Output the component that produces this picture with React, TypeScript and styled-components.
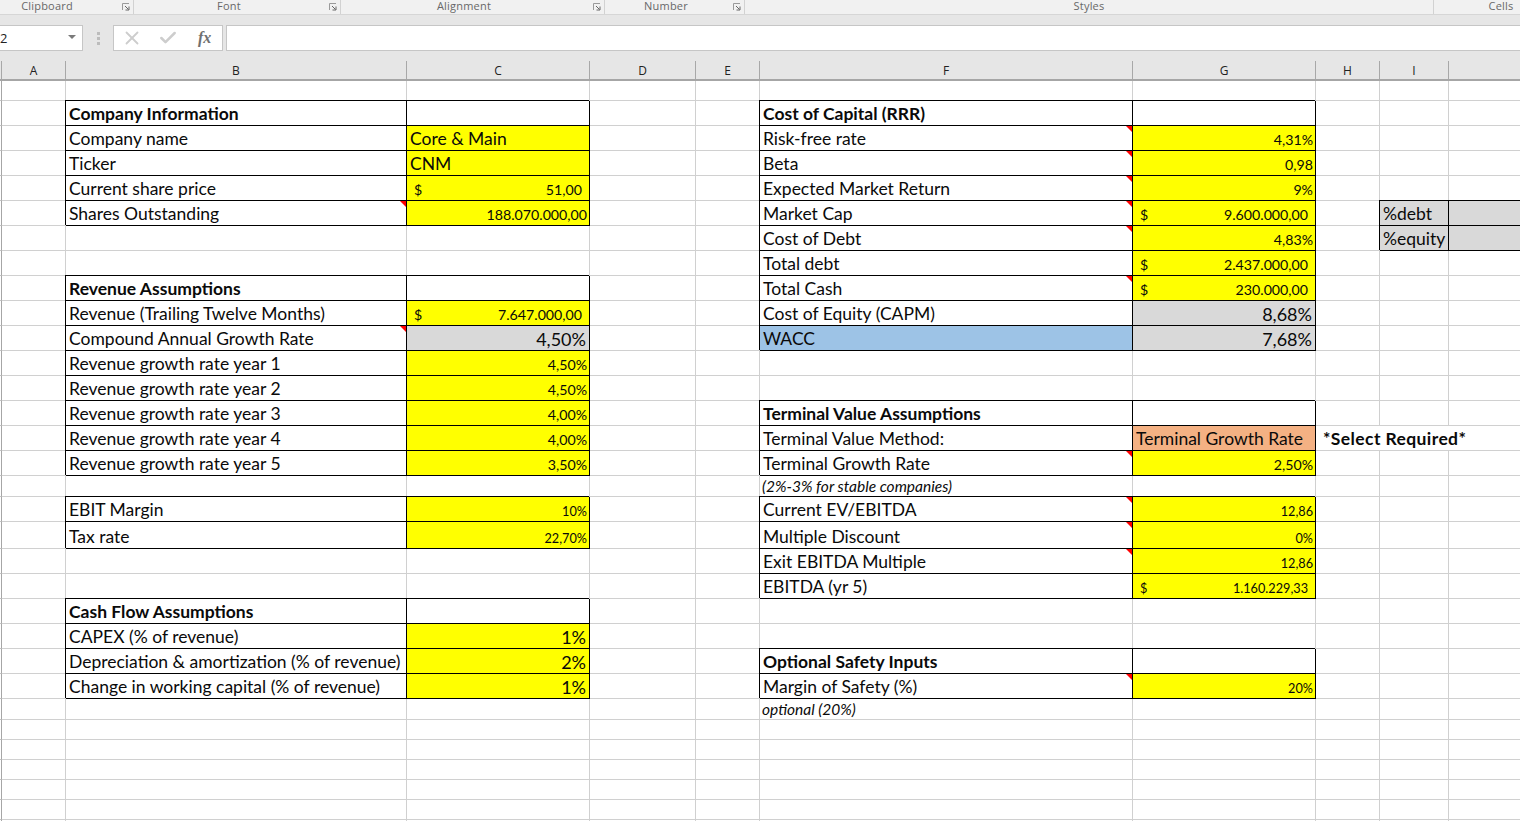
import React from 'react';
import styled, { createGlobalStyle } from 'styled-components';
import { Check, X } from 'lucide-react';

const GlobalStyle = createGlobalStyle`
  html, body {
    margin: 0;
    padding: 0;
    width: 1520px;
    height: 821px;
    overflow: hidden;
    background: #fff;
  }
  * {
    box-sizing: border-box;
  }
`;

const COLUMNS = '2px 64px 341px 183px 106px 64px 373px 183px 64px 69px 100px';
const ROW_HEIGHTS = [
  20, 25, 25, 25, 25, 25, 25, 25, 25, 25, 25, 25, 25, 25, 25, 25, 21, 25, 27, 25, 25, 25, 25, 25, 25, 21, 20, 20, 20, 20,
  20, 20,
];

const Page = styled.div`
  width: 1520px;
  height: 821px;
  overflow: hidden;
  background: #e6e6e6;
`;

const Ribbon = styled.div`
  display: flex;
  height: 15px;
  background: #f1f1f1;
  border-bottom: 1px solid #d6d6d6;
`;

const RibbonGroup = styled.div<{ $width: number; $line?: boolean }>`
  display: flex;
  width: ${p => p.$width}px;
  height: 14px;
  align-items: flex-start;
  border-right: ${p => (p.$line ? '1px solid #d2d2d2' : 'none')};
  padding-right: 3px;
`;

const GroupLabel = styled.div<{ $width: number }>`
  width: ${p => p.$width}px;
  flex: none;
  text-align: center;
  font: 11px/12px 'Open Sans', sans-serif;
  letter-spacing: 0.2px;
  color: #686868;
`;

const Launcher = styled.svg`
  width: 8px;
  height: 8px;
  margin-top: 3px;
  margin-left: auto;
`;

const FormulaBar = styled.div`
  display: flex;
  align-items: stretch;
  height: 26px;
  margin-top: 10px;
`;

const NameBox = styled.div`
  display: flex;
  align-items: center;
  justify-content: space-between;
  width: 83px;
  padding: 0 6px 0 0;
  background: #fff;
  border: 1px solid #c6c6c6;
  border-left: none;
  font: 13px 'Open Sans', sans-serif;
  color: #222;
`;

const DropArrow = styled.span`
  width: 0;
  height: 0;
  margin-top: -2px;
  border-left: 4px solid transparent;
  border-right: 4px solid transparent;
  border-top: 4px solid #7a7a7a;
`;

const Dots = styled.div`
  display: flex;
  flex-direction: column;
  justify-content: center;
  gap: 2px;
  width: 30px;
  padding-left: 14px;
`;

const Dot = styled.span`
  width: 3px;
  height: 3px;
  background: #bcbcbc;
`;

const FxBox = styled.div`
  display: flex;
  align-items: center;
  width: 110px;
  padding-left: 7px;
  padding-bottom: 1px;
  gap: 15px;
  background: #fff;
  border: 1px solid #c6c6c6;
  color: #cdcdcd;
`;

const FxLabel = styled.span`
  margin-left: 5px;
  font: italic bold 16px 'Liberation Serif', serif;
  color: #707070;
`;

const FormulaInput = styled.div`
  flex: 1;
  margin-left: 3px;
  background: #fff;
  border: 1px solid #c6c6c6;
  border-right: none;
`;

const HeadRow = styled.div`
  display: grid;
  grid-template-columns: ${COLUMNS};
  height: 30px;
  padding-top: 10px;
  background: #e6e6e6;
  border-bottom: 2px solid #a6a6a6;
`;

const HeadCell = styled.div`
  display: flex;
  align-items: center;
  justify-content: center;
  border-right: 1px solid #a8a8a8;
  font: 12px 'Open Sans', sans-serif;
  color: #222;
`;

const Sheet = styled.div`
  display: grid;
  grid-template-columns: ${COLUMNS};
  grid-template-rows: ${ROW_HEIGHTS.map(h => `${h}px`).join(' ')};
  background: #fff;
`;

const Gutter = styled.div`
  border-right: 1px solid #a6a6a6;
  border-bottom: 1px solid #c4c4c4;
`;

type Size = 'label' | 'big' | 'value' | 'tiny' | 'note';

const SIZES: Record<Size, { font: number; line: number; right: number }> = {
  label: { font: 17.5, line: 22, right: 2 },
  big: { font: 18, line: 22, right: 3 },
  value: { font: 14.2, line: 20, right: 2 },
  tiny: { font: 12.7, line: 20, right: 2 },
  note: { font: 15.5, line: 20, right: 2 },
};

const Cell = styled.div<{
  $fill?: string;
  $box?: boolean;
  $bold?: boolean;
  $italic?: boolean;
  $size: Size;
  $right?: boolean;
  $money?: boolean;
  $span?: number;
  $indent?: number;
  $loose?: boolean;
}>`
  position: relative;
  display: flex;
  align-items: flex-end;
  min-width: 0;
  grid-column: ${p => (p.$span ? `span ${p.$span}` : 'auto')};
  justify-content: ${p => (p.$money ? 'space-between' : p.$right ? 'flex-end' : 'flex-start')};
  padding-right: ${p => (p.$money ? 7 : SIZES[p.$size].right)}px;
  padding-left: ${p => p.$indent ?? (p.$money ? 7 : p.$italic ? 2 : 3)}px;
  background: ${p => p.$fill ?? 'transparent'};
  border-right: 1px solid ${p => (p.$box ? '#000' : '#d0d0d0')};
  border-bottom: 1px solid ${p => (p.$box ? '#000' : '#d0d0d0')};
  box-shadow: ${p => (p.$box ? '-1px -1px 0 #000' : 'none')};
  font-family: Lato, 'Liberation Sans', sans-serif;
  font-size: ${p => SIZES[p.$size].font}px;
  font-weight: ${p => (p.$bold ? 700 : 400)};
  font-style: ${p => (p.$italic ? 'italic' : 'normal')};
  letter-spacing: ${p => (p.$loose ? '0.4px' : 'normal')};
  line-height: ${p => SIZES[p.$size].line}px;
  white-space: nowrap;
  color: #0a0a0a;
`;

const CommentMark = styled.span`
  position: absolute;
  top: 0;
  right: 0;
  width: 0;
  height: 0;
  border-top: 6px solid #f00;
  border-left: 6px solid transparent;
`;

const YELLOW = '#ffff00';
const GRAY = '#d9d9d9';
const BLUE = '#9dc3e6';
const ORANGE = '#f4b183';

type CellData = {
  text?: string;
  money?: string;
  fill?: string;
  box?: boolean;
  bold?: boolean;
  italic?: boolean;
  size?: Size;
  right?: boolean;
  mark?: boolean;
  span?: number;
  indent?: number;
  loose?: boolean;
};

const label = (text: string, mark = false, fill?: string): CellData => ({ text, mark, fill, box: true });
const title = (text: string): CellData => ({ text, box: true, bold: true });
const input = (text: string): CellData => ({ text, box: true, fill: YELLOW });
const blankBox: CellData = { box: true };
const pct = (text: string, size: Size = 'value'): CellData => ({ text, size, box: true, right: true, fill: YELLOW });
const calc = (text: string): CellData => ({ text, size: 'big', box: true, right: true, fill: GRAY });
const money = (value: string, size: Size = 'value'): CellData => ({
  money: value,
  size,
  box: true,
  fill: YELLOW,
});

// row number -> column letter -> cell
const CELLS: Record<number, Record<string, CellData>> = {
  2: { B: title('Company Information'), C: blankBox, F: title('Cost of Capital (RRR)'), G: blankBox },
  3: {
    B: label('Company name'),
    C: input('Core & Main'),
    F: label('Risk-free rate', true),
    G: pct('4,31%'),
  },
  4: { B: label('Ticker'), C: input('CNM'), F: label('Beta', true), G: pct('0,98') },
  5: {
    B: label('Current share price'),
    C: money('51,00'),
    F: label('Expected Market Return', true),
    G: pct('9%'),
  },
  6: {
    B: label('Shares Outstanding', true),
    C: pct('188.070.000,00'),
    F: label('Market Cap', true),
    G: money('9.600.000,00'),
    I: { text: '%debt', box: true, fill: GRAY },
    J: { box: true, fill: GRAY },
  },
  7: {
    F: label('Cost of Debt', true),
    G: pct('4,83%'),
    I: { text: '%equity', box: true, fill: GRAY },
    J: { box: true, fill: GRAY },
  },
  8: { F: label('Total debt'), G: money('2.437.000,00') },
  9: { B: title('Revenue Assumptions'), C: blankBox, F: label('Total Cash', true), G: money('230.000,00') },
  10: {
    B: label('Revenue (Trailing Twelve Months)'),
    C: money('7.647.000,00'),
    F: label('Cost of Equity (CAPM)'),
    G: calc('8,68%'),
  },
  11: {
    B: label('Compound Annual Growth Rate', true),
    C: calc('4,50%'),
    F: label('WACC', false, BLUE),
    G: calc('7,68%'),
  },
  12: { B: label('Revenue growth rate year 1'), C: pct('4,50%') },
  13: { B: label('Revenue growth rate year 2'), C: pct('4,50%') },
  14: {
    B: label('Revenue growth rate year 3'),
    C: pct('4,00%'),
    F: title('Terminal Value Assumptions'),
    G: blankBox,
  },
  15: {
    B: label('Revenue growth rate year 4'),
    C: pct('4,00%'),
    F: label('Terminal Value Method:'),
    G: { text: 'Terminal Growth Rate', box: true, fill: ORANGE },
    H: { text: '*Select Required*', bold: true, span: 3, indent: 7, loose: true },
  },
  16: {
    B: label('Revenue growth rate year 5'),
    C: pct('3,50%'),
    F: label('Terminal Growth Rate', true),
    G: pct('2,50%'),
  },
  17: { F: { text: '(2%-3% for stable companies)', italic: true, size: 'note' } },
  18: {
    B: label('EBIT Margin'),
    C: pct('10%', 'tiny'),
    F: label('Current EV/EBITDA', true),
    G: pct('12,86', 'tiny'),
  },
  19: {
    B: label('Tax rate'),
    C: pct('22,70%', 'tiny'),
    F: label('Multiple Discount', true),
    G: pct('0%', 'tiny'),
  },
  20: { F: label('Exit EBITDA Multiple', true), G: pct('12,86', 'tiny') },
  21: { F: label('EBITDA (yr 5)'), G: money('1.160.229,33', 'tiny') },
  22: { B: title('Cash Flow Assumptions'), C: blankBox },
  23: { B: label('CAPEX (% of revenue)'), C: pct('1%', 'big') },
  24: {
    B: label('Depreciation & amortization (% of revenue)'),
    C: pct('2%', 'big'),
    F: title('Optional Safety Inputs'),
    G: blankBox,
  },
  25: {
    B: label('Change in working capital (% of revenue)'),
    C: pct('1%', 'big'),
    F: label('Margin of Safety (%)', true),
    G: pct('20%', 'tiny'),
  },
  26: { F: { text: 'optional (20%)', italic: true, size: 'note' } },
};

const LETTERS = ['A', 'B', 'C', 'D', 'E', 'F', 'G', 'H', 'I', 'J'];

const RIBBON_GROUPS = [
  { name: 'Clipboard', width: 134, labelWidth: 94, launcher: true },
  { name: 'Font', width: 207, labelWidth: 190, launcher: true },
  { name: 'Alignment', width: 264, labelWidth: 246, launcher: true },
  { name: 'Number', width: 140, labelWidth: 122, launcher: true },
  { name: 'Styles', width: 689, labelWidth: 688, launcher: false },
  { name: 'Cells', width: 86, labelWidth: 134, launcher: false },
];

function LauncherIcon() {
  return (
    <Launcher viewBox="0 0 8 8" fill="none">
      <path d="M0.5 7V0.5H7" stroke="#9a9a9a" />
      <path d="M3 3L6.5 6.5M7 3.5V7H3.5" stroke="#666" />
    </Launcher>
  );
}

function SheetCell({ data }: { data?: CellData }) {
  const cell = data ?? {};
  return (
    <Cell
      $fill={cell.fill}
      $box={cell.box}
      $bold={cell.bold}
      $italic={cell.italic}
      $size={cell.size ?? 'label'}
      $right={cell.right}
      $money={cell.money !== undefined}
      $span={cell.span}
      $indent={cell.indent}
      $loose={cell.loose}
    >
      {cell.money !== undefined ? (
        <>
          <span>$</span>
          <span>{cell.money}</span>
        </>
      ) : (
        cell.text
      )}
      {cell.mark && <CommentMark />}
    </Cell>
  );
}

function App() {
  return (
    <Page>
      <GlobalStyle />
      <Ribbon>
        {RIBBON_GROUPS.map((group, i) => (
          <RibbonGroup key={group.name} $width={group.width} $line={i < RIBBON_GROUPS.length - 1}>
            <GroupLabel $width={group.labelWidth}>{group.name}</GroupLabel>
            {group.launcher && <LauncherIcon />}
          </RibbonGroup>
        ))}
      </Ribbon>
      <FormulaBar>
        <NameBox>
          2
          <DropArrow />
        </NameBox>
        <Dots>
          <Dot />
          <Dot />
          <Dot />
        </Dots>
        <FxBox>
          <X size={22} strokeWidth={2} />
          <Check size={20} strokeWidth={3} />
          <FxLabel>fx</FxLabel>
        </FxBox>
        <FormulaInput />
      </FormulaBar>
      <HeadRow>
        <HeadCell />
        {LETTERS.map(letter => (
          <HeadCell key={letter}>{letter === 'J' ? '' : letter}</HeadCell>
        ))}
      </HeadRow>
      <Sheet>
        {ROW_HEIGHTS.map((_, i) => {
          const row = i + 1;
          const cells = CELLS[row] ?? {};
          const covered = cells.H?.span ? 3 : 1;
          return (
            <React.Fragment key={row}>
              <Gutter />
              {LETTERS.filter((l, c) => !(covered > 1 && c > 7)).map(letter => (
                <SheetCell key={letter} data={cells[letter]} />
              ))}
            </React.Fragment>
          );
        })}
      </Sheet>
    </Page>
  );
}

export default App;
